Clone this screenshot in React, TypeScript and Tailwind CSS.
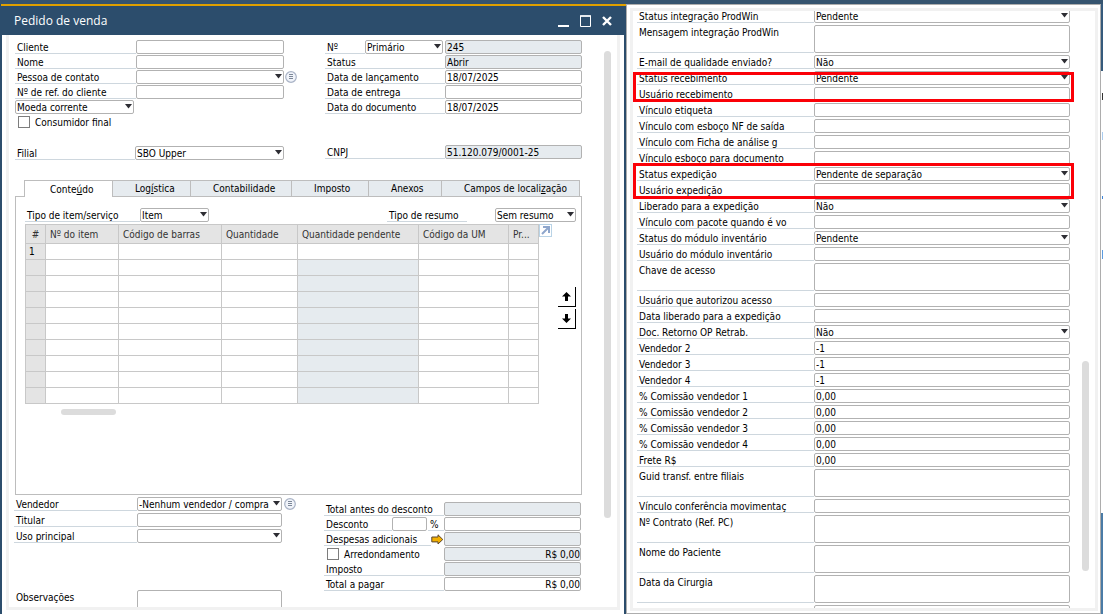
import { useId, type ReactNode } from "react";

const control =
  "block w-full rounded-[2px] border border-[#b2b2b2] text-[10px] leading-[12px] text-black outline-none";

function Arrow() {
  return (
    <svg
      className="pointer-events-none absolute top-[4px] right-[2px]"
      width="7"
      height="5"
      viewBox="0 0 7 5"
      aria-hidden="true"
    >
      <path d="M0 0h7L3.5 4.4z" fill="#2d2d33" />
    </svg>
  );
}

function SelectBox({ id, value, label }: { id?: string; value: string; label?: string }) {
  return (
    <div className="relative min-w-0 flex-1">
      <select
        id={id}
        aria-label={label}
        defaultValue={value}
        className={`${control} h-[14px] appearance-none overflow-hidden bg-white pt-px pr-[7px] pl-px`}
      >
        <option>{value}</option>
      </select>
      <Arrow />
    </div>
  );
}

function TextBox({
  id,
  value = "",
  gray = false,
  right = false,
  label,
}: {
  id?: string;
  value?: string;
  gray?: boolean;
  right?: boolean;
  label?: string;
}) {
  return (
    <input
      id={id}
      aria-label={label}
      type="text"
      defaultValue={value}
      readOnly={gray}
      className={`${control} h-[14px] min-w-0 flex-1 pt-px ${gray ? "bg-[#e6ebef]" : "bg-white"} ${
        right ? "text-right" : "pl-px"
      }`}
    />
  );
}

function Label({ htmlFor, width, children }: { htmlFor?: string; width: string; children: ReactNode }) {
  return (
    <label
      htmlFor={htmlFor}
      className={`${width} shrink-0 overflow-hidden border-b border-[#ced7de] pl-[2px] leading-[15px] whitespace-nowrap`}
    >
      {children}
    </label>
  );
}

type FieldProps = {
  label: string;
  width: string;
  value?: string;
  kind?: "text" | "select";
  gray?: boolean;
  right?: boolean;
};

function Field({ label, width, value = "", kind = "text", gray, right }: FieldProps) {
  const id = useId();
  return (
    <div className="flex h-[14px]">
      <Label htmlFor={id} width={width}>
        {label}
      </Label>
      {kind === "select" ? (
        <SelectBox id={id} value={value} />
      ) : (
        <TextBox id={id} value={value} gray={gray} right={right} />
      )}
    </div>
  );
}

function ListButton({ label }: { label: string }) {
  return (
    <button type="button" aria-label={label} className="block h-3 w-3 shrink-0">
      <svg width="12" height="12" viewBox="0 0 12 12">
        <circle cx="6" cy="6" r="5.3" fill="#f1f4fa" stroke="#a9b3c6" strokeWidth="1.2" />
        <path d="M4 3.5h4M4 5.5h4M4 7.5h4" stroke="#7c8798" strokeWidth="1" />
      </svg>
    </button>
  );
}

function CheckBox({ label }: { label: string }) {
  return (
    <label className="flex h-[14px] items-center gap-[5px] pl-[3px]">
      <input
        type="checkbox"
        className="h-3 w-3 shrink-0 appearance-none border border-[#7d7d7d] bg-white checked:bg-[#2c4d6c]"
      />
      {label}
    </label>
  );
}

function TitleBar() {
  return (
    <header className="flex h-[31px] shrink-0 items-center justify-between border-t-2 border-[#e0a000] bg-[#2c4d6c] pr-[14px] pl-[13px] text-white">
      <h1 className="font-['Open_Sans','Noto_Sans',sans-serif] text-[12px]">Pedido de venda</h1>
      <div className="flex items-center gap-[11px]">
        <button type="button" aria-label="Minimizar">
          <svg width="11" height="12" viewBox="0 0 11 12">
            <path d="M0 11h11" stroke="#fff" strokeWidth="2" />
          </svg>
        </button>
        <button type="button" aria-label="Maximizar">
          <svg width="11" height="12" viewBox="0 0 11 12">
            <path d="M.5 1h10v10.500H.5z" fill="none" stroke="#fff" strokeWidth="1" />
            <path d="M0 1h11" stroke="#fff" strokeWidth="1.500" />
          </svg>
        </button>
        <button type="button" aria-label="Fechar">
          <svg width="10" height="12" viewBox="0 0 10 12">
            <path d="M1 2l8 8M9 2l-8 8" stroke="#fff" strokeWidth="2.4" />
          </svg>
        </button>
      </div>
    </header>
  );
}

function OrderHeader() {
  const numberId = useId();
  return (
    <section className="flex justify-between">
      <div className="flex w-[282px] flex-col gap-px">
        <div className="flex gap-px">
          <div className="flex flex-1 flex-col gap-px">
            <Field label="Cliente" width="w-[121px]" />
            <Field label="Nome" width="w-[121px]" />
            <Field label="Pessoa de contato" width="w-[121px]" kind="select" />
            <Field label="Nº de ref. do cliente" width="w-[121px]" />
          </div>
          <div className="pt-[31px]">
            <ListButton label="Detalhes do contato" />
          </div>
        </div>
        <div className="flex w-[119px]">
          <SelectBox value="Moeda corrente" label="Moeda" />
        </div>
        <CheckBox label="Consumidor final" />
        <div className="w-[269px] pt-4">
          <Field label="Filial" width="w-[120px]" kind="select" value="SBO Upper" />
        </div>
      </div>
      <div className="flex w-[257px] flex-col gap-px">
        <div className="flex h-[14px]">
          <Label htmlFor={numberId} width="w-[40px]">
            Nº
          </Label>
          <div className="mr-[2px] flex w-[78px]">
            <SelectBox value="Primário" label="Série" />
          </div>
          <TextBox id={numberId} value="245" gray />
        </div>
        <Field label="Status" width="w-[120px]" value="Abrir" gray />
        <Field label="Data de lançamento" width="w-[120px]" value="18/07/2025" />
        <Field label="Data de entrega" width="w-[120px]" />
        <Field label="Data do documento" width="w-[120px]" value="18/07/2025" />
        <div className="pt-[30px]">
          <Field label="CNPJ" width="w-[120px]" value="51.120.079/0001-25" gray />
        </div>
      </div>
    </section>
  );
}

const tabs: { width: string; text: ReactNode }[] = [
  { width: "w-[79px]", text: <>Log<u>í</u>stica</> },
  { width: "w-[102px]", text: "Contabilidade" },
  { width: "w-[78px]", text: "Imposto" },
  { width: "w-[74px]", text: "Anexos" },
  { width: "w-[139px]", text: <>Campos de locali<u>z</u>ação</> },
];

function Tabs() {
  return (
    <div role="tablist" className="relative z-10 -mb-px flex pl-[9px]">
      <button
        type="button"
        role="tab"
        aria-selected="true"
        className="h-[17px] w-[89px] border border-b-0 border-[#bdbdbd] bg-white pl-[25px] text-left"
      >
        Conte<u>ú</u>do
      </button>
      {tabs.map((tab) => (
        <button
          key={tab.width}
          type="button"
          role="tab"
          aria-selected="false"
          className={`${tab.width} -ml-px h-[17px] border border-[#bdbdbd] bg-[#e6ebef] pl-[22px] text-left whitespace-nowrap`}
        >
          {tab.text}
        </button>
      ))}
    </div>
  );
}

const columns = [
  { text: "Nº do item", width: "w-[73px]" },
  { text: "Código de barras", width: "w-[103px]" },
  { text: "Quantidade", width: "w-[76px]" },
  { text: "Quantidade pendente", width: "w-[121px]" },
  { text: "Código da UM", width: "w-[90px]" },
  { text: "Pr...", width: "w-[30px]" },
];

function ItemsTable() {
  return (
    <table className="w-[514px] table-fixed border-collapse">
      <thead>
        <tr className="h-[19px] bg-[#e4e4e4] text-left text-[#333]">
          <th className="w-[20px] border border-[#c8c8c8] p-0 text-center font-normal">#</th>
          {columns.map((c) => (
            <th
              key={c.text}
              className={`${c.width} border border-[#c8c8c8] p-0 pl-1 font-normal whitespace-nowrap`}
            >
              {c.text}
            </th>
          ))}
        </tr>
      </thead>
      <tbody>
        {Array.from({ length: 10 }, (_, row) => (
          <tr key={row} className="h-4">
            <td className="border border-[#c8c8c8] bg-[#e4e4e4] p-0 pl-[3px]">{row === 0 ? "1" : ""}</td>
            {columns.map((c, i) => (
              <td
                key={c.text}
                className={`border border-[#c8c8c8] p-0 ${i === 3 && row > 0 ? "bg-[#e6ebef]" : ""}`}
              />
            ))}
          </tr>
        ))}
      </tbody>
    </table>
  );
}

function MoveButton({ label, down = false }: { label: string; down?: boolean }) {
  return (
    <button
      type="button"
      aria-label={label}
      className="flex h-5 w-[18px] items-center justify-center border-r border-b border-black bg-white"
    >
      <svg width="9" height="9" viewBox="0 0 9 9" className={down ? "rotate-180" : ""}>
        <path d="M4.5 0L9 4.6H6V9H3V4.6H0z" fill="#000" />
      </svg>
    </button>
  );
}

function ContentPanel() {
  const typeId = useId();
  const summaryId = useId();
  return (
    <section className="pt-5">
      <Tabs />
      <div className="h-[299px] border border-[#bdbdbd] pt-[11px] pr-[5px] pl-[9px]">
        <div className="flex h-[14px] justify-between">
          <div className="flex w-[184px]">
            <Label htmlFor={typeId} width="w-[115px]">
              Tipo de item/serviço
            </Label>
            <SelectBox id={typeId} value="Item" />
          </div>
          <div className="flex w-[189px]">
            <Label htmlFor={summaryId} width="w-[80px]">
              Tipo de resumo
            </Label>
            <div className="ml-7 flex w-[81px]">
              <SelectBox id={summaryId} value="Sem resumo" />
            </div>
          </div>
        </div>
        <div className="flex pt-[2px]">
          <ItemsTable />
          <div className="flex flex-1 flex-col items-end justify-between">
            <button
              type="button"
              aria-label="Expandir tabela"
              className="h-[13px] w-[13px] self-start border border-[#b9d3e6] bg-white"
            >
              <svg width="11" height="11" viewBox="0 0 11 11">
                <path d="M2 9l6-6M3 2h6v6" fill="none" stroke="#8ea6cc" strokeWidth="2" />
              </svg>
            </button>
            <div className="flex flex-col gap-[2px] pb-[75px]">
              <MoveButton label="Mover para cima" />
              <MoveButton label="Mover para baixo" down />
            </div>
          </div>
        </div>
        <div className="mt-[5px] ml-9 h-[6px] w-[55px] rounded-full bg-[#dcdcdc]" />
      </div>
    </section>
  );
}

function OrderFooter() {
  const notesId = useId();
  const discountId = useId();
  const expensesId = useId();
  const roundingId = useId();
  return (
    <section className="-mx-px flex justify-between pt-[2px]">
      <div className="flex w-[282px] gap-[2px]">
        <div className="flex w-[268px] flex-col gap-[2px]">
          <Field label="Vendedor" width="w-[123px]" kind="select" value="-Nenhum vendedor / compra" />
          <Field label="Titular" width="w-[123px]" />
          <Field label="Uso principal" width="w-[123px]" kind="select" />
          <div className="flex pt-[45px]">
            <label htmlFor={notesId} className="w-[123px] pl-[2px] leading-[16px]">
              Observações
            </label>
            <textarea id={notesId} className={`${control} h-9 flex-1 resize-none bg-white`} />
          </div>
        </div>
        <div className="pt-px">
          <ListButton label="Detalhes do vendedor" />
        </div>
      </div>
      <div className="mr-[2px] flex w-[257px] flex-col gap-px pt-[5px]">
        <Field label="Total antes do desconto" width="w-[120px]" gray />
        <div className="flex h-[14px]">
          <Label htmlFor={discountId} width="w-[68px]">
            Desconto
          </Label>
          <div className="flex w-[35px]">
            <TextBox id={discountId} />
          </div>
          <span className="ml-px w-4 border-b border-[#ced7de] pl-[2px] leading-[15px]">%</span>
          <TextBox label="Valor do desconto" />
        </div>
        <div className="flex h-[14px]">
          <Label htmlFor={expensesId} width="w-[107px]">
            Despesas adicionais
          </Label>
          <button type="button" aria-label="Abrir despesas" className="h-[14px] w-[13px]">
            <svg width="13" height="14" viewBox="0 0 13 14">
              <path
                d="M.8 5h6.200V2.800l4.800 4.700L7 12V9.900H.8z"
                fill="#f3b000"
                stroke="#5a4630"
                strokeWidth="1"
              />
            </svg>
          </button>
          <TextBox id={expensesId} gray />
        </div>
        <div className="flex h-[14px]">
          <div className="w-[120px]">
            <CheckBox label="Arredondamento" />
          </div>
          <TextBox id={roundingId} label="Valor do arredondamento" value="R$ 0,00" gray right />
        </div>
        <Field label="Imposto" width="w-[120px]" gray />
        <Field label="Total a pagar" width="w-[120px]" value="R$ 0,00" right />
      </div>
    </section>
  );
}

function OrderWindow() {
  return (
    <main className="ml-px flex min-w-0 flex-[625] flex-col">
      <TitleBar />
      <div className="mr-[2px] ml-px flex min-h-0 flex-1 flex-col bg-white px-1 pb-1">
        <div className="flex min-h-0 flex-1 overflow-hidden border-r-3 border-b-3 border-l-3 border-[#f1f1f1]">
          <div className="min-w-0 flex-1 pt-[5px] pl-[6px]">
            <OrderHeader />
            <ContentPanel />
            <OrderFooter />
          </div>
          <div className="w-[35px] shrink-0 pt-4 pl-[22px]">
            <div className="h-[84%] w-[7px] rounded-full bg-[#dcdcdc]" />
          </div>
        </div>
      </div>
    </main>
  );
}

type UserField = { label: string; value?: string; kind?: "select" | "area" };

function UserFieldRow({ label, value = "", kind }: UserField) {
  const id = useId();
  if (kind === "area") {
    return (
      <div className="flex h-7">
        <Label htmlFor={id} width="w-[177px]">
          {label}
        </Label>
        <textarea id={id} className={`${control} h-7 min-w-0 flex-1 resize-none bg-white`} />
      </div>
    );
  }
  return <Field label={label} width="w-[177px]" value={value} kind={kind === "select" ? "select" : "text"} />;
}

function Rows({ items }: { items: UserField[] }) {
  return (
    <>
      {items.map((f) => (
        <UserFieldRow key={f.label} {...f} />
      ))}
    </>
  );
}

const integration: UserField[] = [
  { label: "Status integração ProdWin", value: "Pendente", kind: "select" },
  { label: "Mensagem integração ProdWin", kind: "area" },
  { label: "E-mail de qualidade enviado?", value: "Não", kind: "select" },
];

const receiving: UserField[] = [
  { label: "Status recebimento", value: "Pendente", kind: "select" },
  { label: "Usuário recebimento" },
];

const links: UserField[] = [
  { label: "Vínculo etiqueta" },
  { label: "Vínculo com esboço NF de saída" },
  { label: "Vínculo com Ficha de análise g" },
  { label: "Vínculo esboço para documento" },
];

const shipping: UserField[] = [
  { label: "Status expedição", value: "Pendente de separação", kind: "select" },
  { label: "Usuário expedição" },
];

const remaining: UserField[] = [
  { label: "Liberado para a expedição", value: "Não", kind: "select" },
  { label: "Vínculo com pacote quando é vo" },
  { label: "Status do módulo inventário", value: "Pendente", kind: "select" },
  { label: "Usuário do módulo inventário" },
  { label: "Chave de acesso", kind: "area" },
  { label: "Usuário que autorizou acesso" },
  { label: "Data liberado para a expedição" },
  { label: "Doc. Retorno OP Retrab.", value: "Não", kind: "select" },
  { label: "Vendedor 2", value: "-1" },
  { label: "Vendedor 3", value: "-1" },
  { label: "Vendedor 4", value: "-1" },
  { label: "% Comissão vendedor 1", value: "0,00" },
  { label: "% Comissão vendedor 2", value: "0,00" },
  { label: "% Comissão vendedor 3", value: "0,00" },
  { label: "% Comissão vendedor 4", value: "0,00" },
  { label: "Frete R$", value: "0,00" },
  { label: "Guid transf. entre filiais", kind: "area" },
  { label: "Vínculo conferência movimentaç" },
  { label: "Nº Contrato (Ref. PC)", kind: "area" },
  { label: "Nome do Paciente", kind: "area" },
  { label: "Data da Cirurgia", kind: "area" },
  { label: "", kind: "area" },
];

function UserFieldsWindow() {
  return (
    <aside className="flex min-w-0 flex-[475]">
      <div className="flex min-w-0 flex-1 border border-[#adadad] bg-white pt-[3px] pr-[2px] pb-[2px] pl-[3px]">
        <div className="flex min-w-0 flex-1 overflow-hidden border-3 border-[#f1f1f1]">
          <div className="-mt-[2px] flex min-w-0 flex-1 flex-col gap-[2px] pl-1">
            <Rows items={integration} />
            <div className="relative flex flex-col gap-[2px]">
              <Rows items={receiving} />
              <div className="pointer-events-none absolute -inset-x-1 top-px -bottom-px border-3 border-[#fb0007]" />
            </div>
            <Rows items={links} />
            <div className="relative flex flex-col gap-[2px]">
              <Rows items={shipping} />
              <div className="pointer-events-none absolute -inset-x-1 -top-1 -bottom-[2px] border-3 border-[#fb0007]" />
            </div>
            <Rows items={remaining} />
          </div>
          <div className="flex w-[25px] shrink-0 flex-col pl-3">
            <div className="grow-[350]" />
            <div className="w-[7px] grow-[210] rounded-full bg-[#dcdcdc]" />
            <div className="grow-[37]" />
          </div>
        </div>
      </div>
    </aside>
  );
}

function BackgroundEdge() {
  return (
    <div className="flex w-[2px] shrink-0 flex-col">
      <div className="flex-[67] bg-[#365a7c]" />
      <div className="flex flex-[442] flex-col bg-white">
        <div className="mt-[22px] ml-px h-[7px] bg-[#333]" />
        <div className="mt-8 ml-px h-2 bg-[#a9cbee]" />
        <div className="mt-14 ml-px h-[3px] bg-[#3f86d8]" />
        <div className="mt-[51px] ml-px h-[9px] bg-[#5b9be0]" />
      </div>
      <div className="flex-[101] bg-[#4a7ba6]" />
    </div>
  );
}

export default function App() {
  return (
    <div className="flex h-screen flex-col overflow-hidden bg-[#2c4d6c] font-['DejaVu_Sans_Condensed','Noto_Sans',sans-serif] text-[10px] leading-[13px] text-black">
      <div className="h-1 shrink-0 bg-[#36546f]" />
      <div className="flex min-h-0 flex-1">
        <OrderWindow />
        <UserFieldsWindow />
        <BackgroundEdge />
      </div>
    </div>
  );
}
